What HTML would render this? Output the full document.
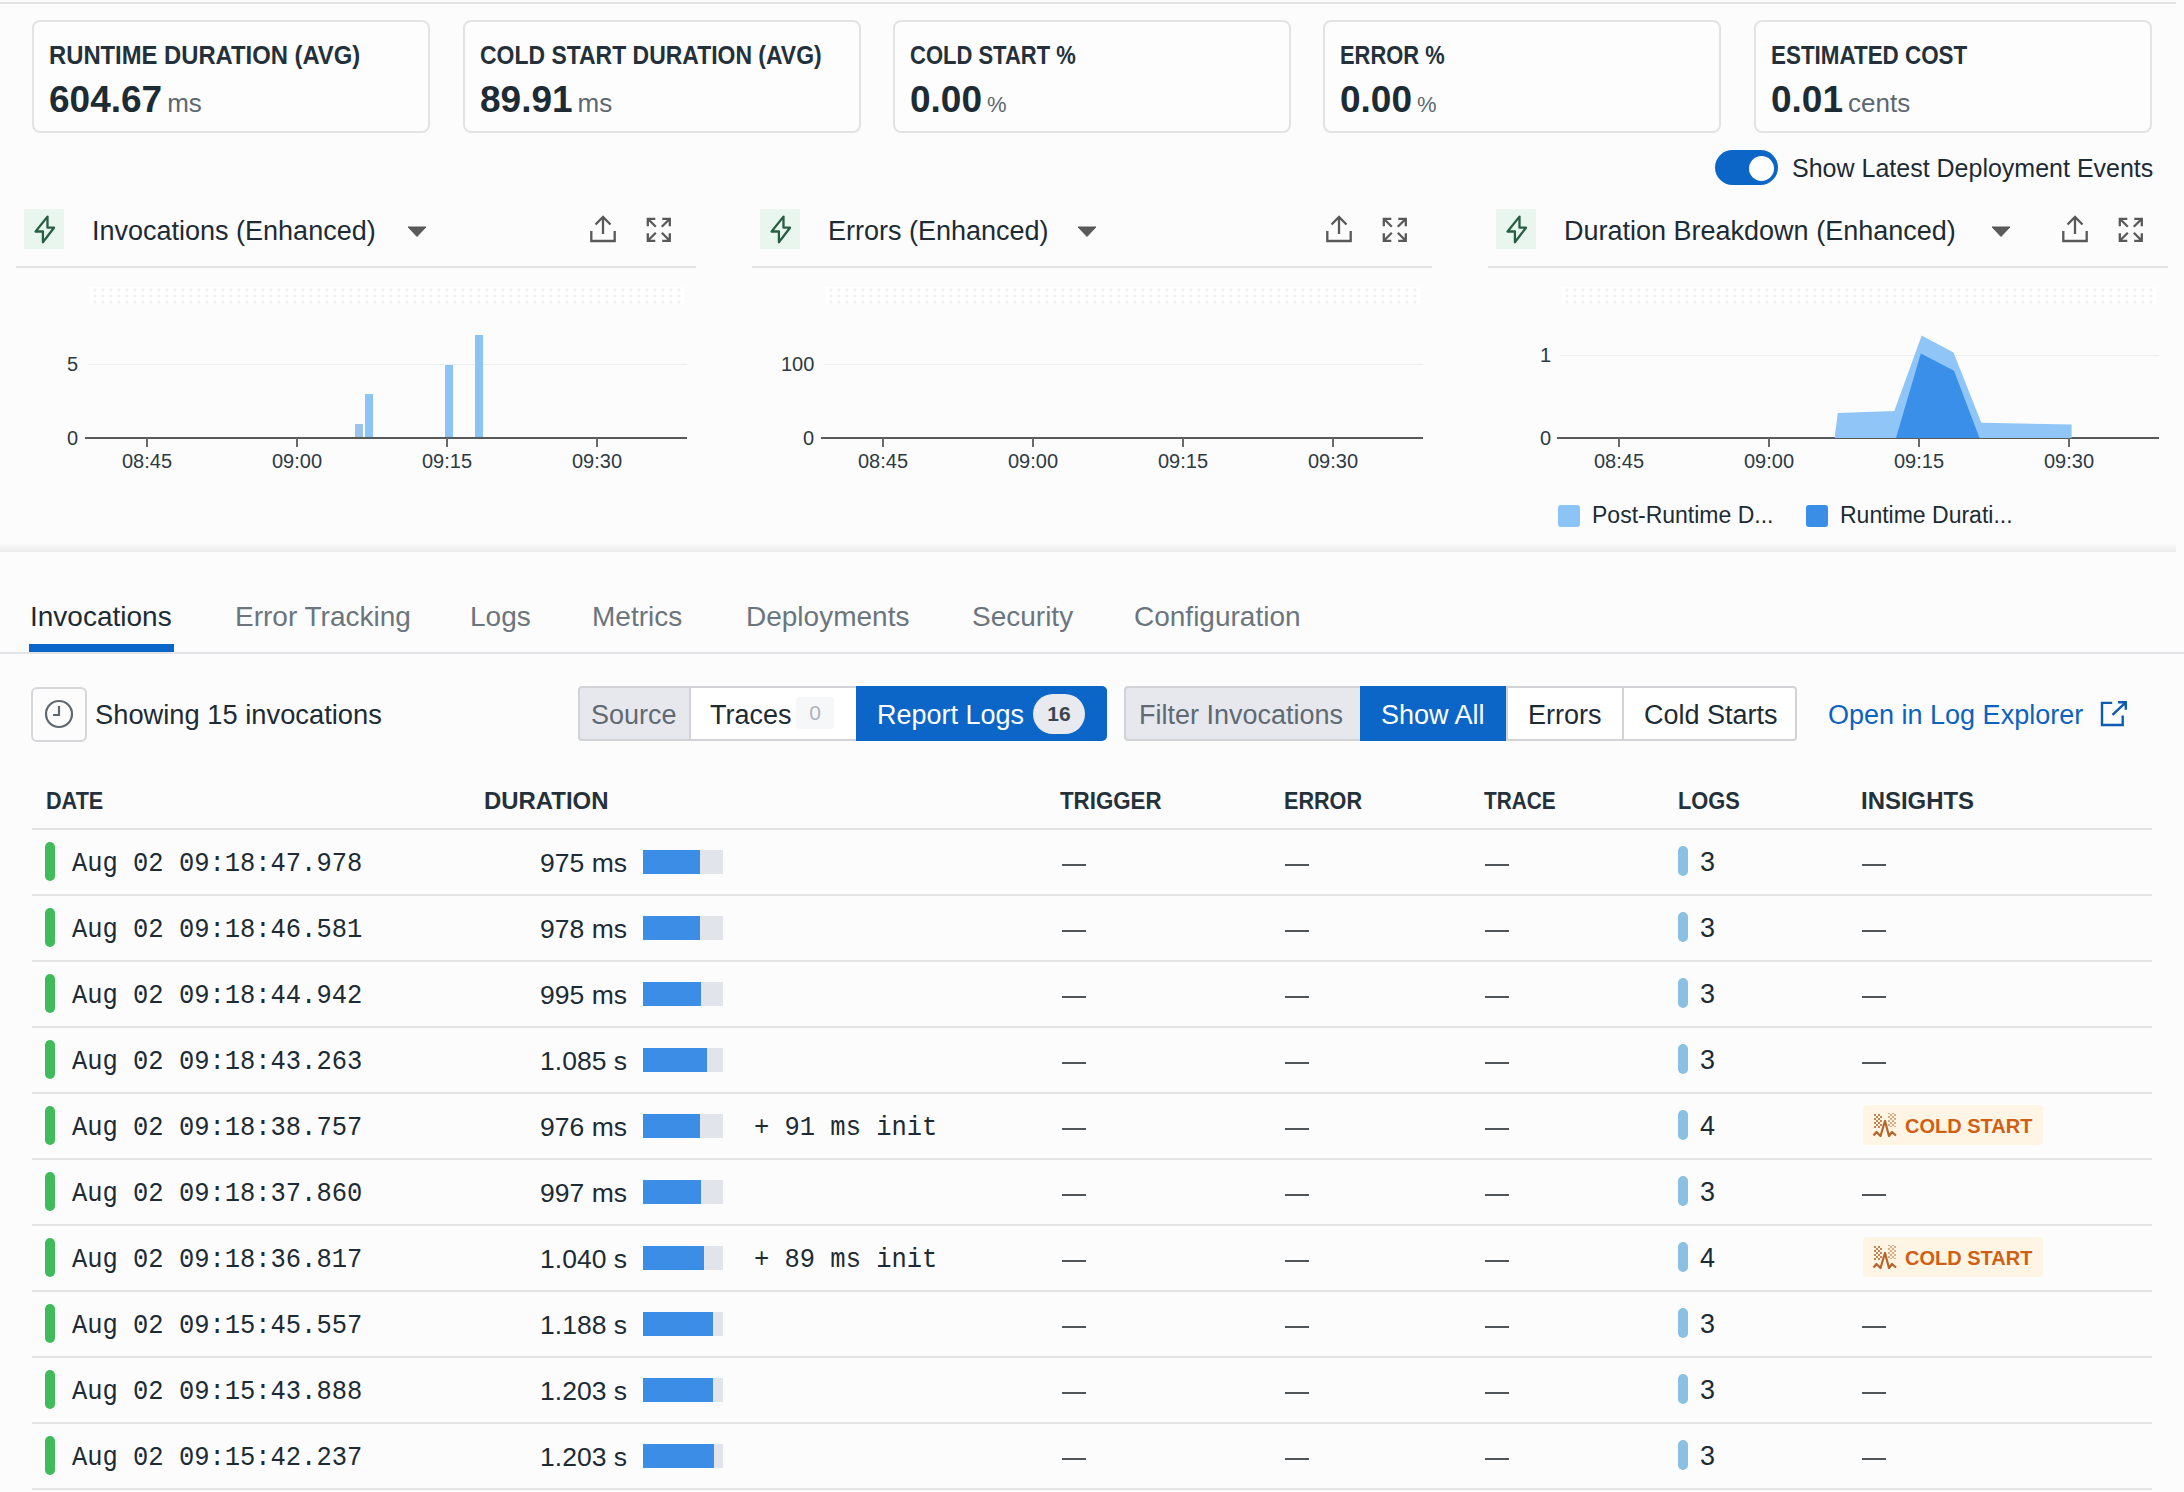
<!DOCTYPE html>
<html><head><meta charset="utf-8">
<style>
*{box-sizing:border-box;margin:0;padding:0}
html,body{width:2184px;height:1492px;overflow:hidden;background:#fcfcfc}
body{position:relative;font-family:"Liberation Sans",sans-serif;color:#1c2b34}
.a{position:absolute;white-space:nowrap;line-height:1}
.topline{position:absolute;left:0;top:2px;width:2176px;height:2px;background:#e3e3e3}
.card{position:absolute;top:20px;height:113px;width:398px;border:2px solid #e3e3e3;border-radius:8px;background:#fdfdfd}
.card .lbl{position:absolute;left:15px;top:21px;font-size:25px;color:#24313a;transform-origin:0 0;font-weight:bold;line-height:1;white-space:nowrap}
.card .val{position:absolute;left:15px;top:59px;font-size:37px;font-weight:bold;line-height:1;white-space:nowrap}
.card .val span{font-size:26px;font-weight:normal;color:#5c6770;margin-left:5px}
.hdrline{position:absolute;top:266px;height:2px;background:#e5e5e5}
.bolt{position:absolute;top:209px;width:40px;height:40px;background:#e8f6ee;border-radius:1px}
.bolt svg{display:block}
.ctitle{position:absolute;top:218px;font-size:27px;line-height:1;white-space:nowrap;color:#1c2b34}
.dots{position:absolute;top:287px;height:17px;background-color:#fff;background-image:radial-gradient(circle,#f1f1f1 1.3px,transparent 1.8px);background-size:8px 6px;background-position:2px 0}
.grid{position:absolute;height:1px;background:#eceef0}
.axis{position:absolute;height:2px;background:#595959}
.tick{position:absolute;width:2px;height:9px;background:#6a6a6a}
.ylbl{position:absolute;margin-top:-1px;font-size:20px;line-height:1;color:#2d3a42;white-space:nowrap}
.xlbl{position:absolute;font-size:20px;line-height:1;color:#2d3a42;white-space:nowrap;width:80px;text-align:center}
.tab{position:absolute;top:603px;font-size:28px;line-height:1;color:#6b757d;white-space:nowrap}
.seg{position:absolute;top:686px;height:55px;background:#fff;font-size:27px;line-height:55px;white-space:nowrap;border-top:2px solid #d2d3d6;border-bottom:2px solid #d2d3d6}
.th{position:absolute;top:789px;font-size:24px;color:#24313a;transform-origin:0 0;font-weight:bold;line-height:1;white-space:nowrap}
.row{position:absolute;left:32px;width:2120px;height:67px;border-bottom:2px solid #e5e5e5}
.st{position:absolute;left:13px;top:13px;width:10px;height:39px;border-radius:5px;background:#3fbb5c}
.date{position:absolute;left:40px;top:21px;font-family:"Liberation Mono",monospace;font-size:28px;transform:scaleX(0.909);transform-origin:0 0;line-height:1;white-space:nowrap}
.dur{position:absolute;left:0;width:595px;text-align:right;top:21px;font-size:26.5px;line-height:1;white-space:nowrap}
.dbar{position:absolute;left:611px;top:21px;width:80px;height:24px;background:#e1e4eb}
.dbar i{position:absolute;left:0;top:0;height:24px;background:#3b8de6}
.init{position:absolute;left:722px;top:21px;font-family:"Liberation Mono",monospace;font-size:28px;transform:scaleX(0.909);transform-origin:0 0;line-height:1;white-space:nowrap}
.dash{position:absolute;top:35px;width:24px;height:2px;background:#4f5559}
.lbar{position:absolute;left:1646px;top:17px;width:10px;height:30px;border-radius:5px;background:#8ac0e2}
.lnum{position:absolute;left:1668px;top:20px;font-size:27px;line-height:1}
.cold{position:absolute;left:1831px;top:12px;width:180px;height:40px;background:#fff5e4;border-radius:4px}
.cold svg{position:absolute;left:9px;top:7px}
.cold b{position:absolute;left:42px;top:11px;font-size:20px;line-height:1;color:#cf5f14;white-space:nowrap}
</style></head><body>
<div class="topline"></div>
<div class="card" style="left:32px"><div class="lbl" style="transform:scaleX(0.952)">RUNTIME DURATION (AVG)</div><div class="val">604.67<span>ms</span></div></div>
<div class="card" style="left:463px"><div class="lbl" style="transform:scaleX(0.918)">COLD START DURATION (AVG)</div><div class="val">89.91<span>ms</span></div></div>
<div class="card" style="left:893px"><div class="lbl" style="transform:scaleX(0.88)">COLD START %</div><div class="val">0.00<span style="font-size:22px">%</span></div></div>
<div class="card" style="left:1323px"><div class="lbl" style="transform:scaleX(0.876)">ERROR %</div><div class="val">0.00<span style="font-size:22px">%</span></div></div>
<div class="card" style="left:1754px"><div class="lbl" style="transform:scaleX(0.896)">ESTIMATED COST</div><div class="val">0.01<span>cents</span></div></div>
<div class="a" style="left:1715px;top:150px;width:63px;height:35px;border-radius:18px;background:#0b66c8"></div>
<div class="a" style="left:1748.5px;top:155.5px;width:25px;height:25px;border-radius:50%;background:#fff"></div>
<div class="a" style="left:1792px;top:156px;font-size:25px">Show Latest Deployment Events</div>
<div class="hdrline" style="left:16px;width:680px"></div>
<div class="bolt" style="left:24px"><svg width="40" height="40" viewBox="0 0 40 40"><path d="M23.5 7.6 L11.6 22.5 H18.9 V33.3 L30 18.7 H23.5 Z" fill="none" stroke="#285f43" stroke-width="2.3" stroke-linejoin="round"/></svg></div>
<div class="ctitle" style="left:92px">Invocations (Enhanced)</div>
<div class="a" style="left:407px;top:225px"><svg width="20" height="12" viewBox="0 0 20 12"><path d="M1 1 H19 L10 10.5 Z" fill="#595959" stroke="#595959" stroke-width="1" stroke-linejoin="round"/></svg></div>
<div class="a" style="left:587px;top:213px"><svg width="32" height="32" viewBox="0 0 32 32"><path d="M16 4.5 V21 M8.5 11.5 L16 4 L23.5 11.5" fill="none" stroke="#595959" stroke-width="2.3"/><path d="M4.3 18 V28 H27.7 V18" fill="none" stroke="#595959" stroke-width="2.3"/></svg></div>
<div class="a" style="left:644px;top:215px"><svg width="30" height="30" viewBox="0 0 30 30"><g fill="none" stroke="#595959" stroke-width="2.3" stroke-linecap="butt" stroke-linejoin="miter"><path d="M11.3 3.8 H3.8 V11.3 M3.8 3.8 L11.8 11.8"/><path d="M18.3 3.8 H25.8 V11.3 M25.8 3.8 L17.8 11.8"/><path d="M11.3 25.8 H3.8 V18.3 M3.8 25.8 L11.8 17.8"/><path d="M18.3 25.8 H25.8 V18.3 M25.8 25.8 L17.8 17.8"/></g></svg></div>
<div class="dots" style="left:89px;width:595px"></div>
<div class="axis" style="left:85px;top:437px;width:602px"></div>
<div class="tick" style="left:146px;top:438px"></div>
<div class="xlbl" style="left:107px;top:451px">08:45</div>
<div class="tick" style="left:296px;top:438px"></div>
<div class="xlbl" style="left:257px;top:451px">09:00</div>
<div class="tick" style="left:446px;top:438px"></div>
<div class="xlbl" style="left:407px;top:451px">09:15</div>
<div class="tick" style="left:596px;top:438px"></div>
<div class="xlbl" style="left:557px;top:451px">09:30</div>
<div class="hdrline" style="left:752px;width:680px"></div>
<div class="bolt" style="left:760px"><svg width="40" height="40" viewBox="0 0 40 40"><path d="M23.5 7.6 L11.6 22.5 H18.9 V33.3 L30 18.7 H23.5 Z" fill="none" stroke="#285f43" stroke-width="2.3" stroke-linejoin="round"/></svg></div>
<div class="ctitle" style="left:828px">Errors (Enhanced)</div>
<div class="a" style="left:1077px;top:225px"><svg width="20" height="12" viewBox="0 0 20 12"><path d="M1 1 H19 L10 10.5 Z" fill="#595959" stroke="#595959" stroke-width="1" stroke-linejoin="round"/></svg></div>
<div class="a" style="left:1323px;top:213px"><svg width="32" height="32" viewBox="0 0 32 32"><path d="M16 4.5 V21 M8.5 11.5 L16 4 L23.5 11.5" fill="none" stroke="#595959" stroke-width="2.3"/><path d="M4.3 18 V28 H27.7 V18" fill="none" stroke="#595959" stroke-width="2.3"/></svg></div>
<div class="a" style="left:1380px;top:215px"><svg width="30" height="30" viewBox="0 0 30 30"><g fill="none" stroke="#595959" stroke-width="2.3" stroke-linecap="butt" stroke-linejoin="miter"><path d="M11.3 3.8 H3.8 V11.3 M3.8 3.8 L11.8 11.8"/><path d="M18.3 3.8 H25.8 V11.3 M25.8 3.8 L17.8 11.8"/><path d="M11.3 25.8 H3.8 V18.3 M3.8 25.8 L11.8 17.8"/><path d="M18.3 25.8 H25.8 V18.3 M25.8 25.8 L17.8 17.8"/></g></svg></div>
<div class="dots" style="left:825px;width:595px"></div>
<div class="axis" style="left:821px;top:437px;width:602px"></div>
<div class="tick" style="left:882px;top:438px"></div>
<div class="xlbl" style="left:843px;top:451px">08:45</div>
<div class="tick" style="left:1032px;top:438px"></div>
<div class="xlbl" style="left:993px;top:451px">09:00</div>
<div class="tick" style="left:1182px;top:438px"></div>
<div class="xlbl" style="left:1143px;top:451px">09:15</div>
<div class="tick" style="left:1332px;top:438px"></div>
<div class="xlbl" style="left:1293px;top:451px">09:30</div>
<div class="hdrline" style="left:1488px;width:680px"></div>
<div class="bolt" style="left:1496px"><svg width="40" height="40" viewBox="0 0 40 40"><path d="M23.5 7.6 L11.6 22.5 H18.9 V33.3 L30 18.7 H23.5 Z" fill="none" stroke="#285f43" stroke-width="2.3" stroke-linejoin="round"/></svg></div>
<div class="ctitle" style="left:1564px">Duration Breakdown (Enhanced)</div>
<div class="a" style="left:1991px;top:225px"><svg width="20" height="12" viewBox="0 0 20 12"><path d="M1 1 H19 L10 10.5 Z" fill="#595959" stroke="#595959" stroke-width="1" stroke-linejoin="round"/></svg></div>
<div class="a" style="left:2059px;top:213px"><svg width="32" height="32" viewBox="0 0 32 32"><path d="M16 4.5 V21 M8.5 11.5 L16 4 L23.5 11.5" fill="none" stroke="#595959" stroke-width="2.3"/><path d="M4.3 18 V28 H27.7 V18" fill="none" stroke="#595959" stroke-width="2.3"/></svg></div>
<div class="a" style="left:2116px;top:215px"><svg width="30" height="30" viewBox="0 0 30 30"><g fill="none" stroke="#595959" stroke-width="2.3" stroke-linecap="butt" stroke-linejoin="miter"><path d="M11.3 3.8 H3.8 V11.3 M3.8 3.8 L11.8 11.8"/><path d="M18.3 3.8 H25.8 V11.3 M25.8 3.8 L17.8 11.8"/><path d="M11.3 25.8 H3.8 V18.3 M3.8 25.8 L11.8 17.8"/><path d="M18.3 25.8 H25.8 V18.3 M25.8 25.8 L17.8 17.8"/></g></svg></div>
<div class="dots" style="left:1561px;width:595px"></div>
<div class="axis" style="left:1557px;top:437px;width:602px"></div>
<div class="tick" style="left:1618px;top:438px"></div>
<div class="xlbl" style="left:1579px;top:451px">08:45</div>
<div class="tick" style="left:1768px;top:438px"></div>
<div class="xlbl" style="left:1729px;top:451px">09:00</div>
<div class="tick" style="left:1918px;top:438px"></div>
<div class="xlbl" style="left:1879px;top:451px">09:15</div>
<div class="tick" style="left:2068px;top:438px"></div>
<div class="xlbl" style="left:2029px;top:451px">09:30</div>
<div class="grid" style="left:88px;top:364px;width:599px"></div>
<div class="ylbl" style="left:67px;top:355px">5</div>
<div class="ylbl" style="left:67px;top:429px">0</div>
<div class="grid" style="left:824px;top:364px;width:599px"></div>
<div class="ylbl" style="left:781px;top:355px">100</div>
<div class="ylbl" style="left:803px;top:429px">0</div>
<div class="grid" style="left:1560px;top:355px;width:599px"></div>
<div class="ylbl" style="left:1540px;top:346px">1</div>
<div class="ylbl" style="left:1540px;top:429px">0</div>
<div class="a" style="left:355px;top:424px;width:8px;height:13px;background:#9cc3ea"></div>
<div class="a" style="left:365px;top:394px;width:8px;height:43px;background:#8cc4f6"></div>
<div class="a" style="left:445px;top:365px;width:8px;height:72px;background:#8cc4f6"></div>
<div class="a" style="left:475px;top:335px;width:8px;height:102px;background:#8cc4f6"></div>
<svg class="a" style="left:0;top:0" width="2184" height="540"><polygon points="1834.6,438 1837.8,413 1894.3,410.9 1921.7,335.5 1953.5,352.5 1981.3,422.8 2071.6,424.4 2071.6,438" fill="#8fc5f7"/><polygon points="1896,438 1920.8,353.4 1954,370.7 1979.5,438" fill="#3a90e8"/></svg>
<div class="a" style="left:1558px;top:505px;width:22px;height:22px;border-radius:3px;background:#8cc4f6"></div>
<div class="a" style="left:1592px;top:504px;font-size:23px">Post-Runtime D...</div>
<div class="a" style="left:1806px;top:505px;width:22px;height:22px;border-radius:3px;background:#3a8ee6"></div>
<div class="a" style="left:1840px;top:504px;font-size:23px">Runtime Durati...</div>
<div class="a" style="left:0;top:544px;width:2176px;height:8px;background:linear-gradient(#f9f9f9,#ededed)"></div>
<div class="tab" style="left:30px;color:#1c2b34">Invocations</div>
<div class="tab" style="left:235px;color:#6b757d">Error Tracking</div>
<div class="tab" style="left:470px;color:#6b757d">Logs</div>
<div class="tab" style="left:592px;color:#6b757d">Metrics</div>
<div class="tab" style="left:746px;color:#6b757d">Deployments</div>
<div class="tab" style="left:972px;color:#6b757d">Security</div>
<div class="tab" style="left:1134px;color:#6b757d">Configuration</div>
<div class="a" style="left:0;top:652px;width:2184px;height:2px;background:#e3e5e8"></div>
<div class="a" style="left:29px;top:644px;width:145px;height:8px;background:#0b66c8"></div>
<div class="a" style="left:31px;top:687px;width:56px;height:55px;border:2px solid #d6d7da;border-radius:6px"></div>
<svg class="a" style="left:42px;top:697px" width="34" height="34" viewBox="0 0 34 34"><circle cx="17" cy="17" r="13" fill="none" stroke="#5f676e" stroke-width="2.2"/><path d="M17 9 V18 H11" fill="none" stroke="#5f676e" stroke-width="2.2"/></svg>
<div class="a" style="left:95px;top:701px;font-size:27.3px">Showing 15 invocations</div>
<div class="seg" style="left:578px;width:111px;background:#e6e8ee;color:#5f6a73;border-left:2px solid #d2d3d6;border-radius:4px 0 0 4px;padding-left:11px">Source</div>
<div class="seg" style="left:689px;width:167px;border-left:2px solid #d2d3d6;padding-left:19px">Traces<span style="position:absolute;left:105px;top:9px;width:38px;height:32px;line-height:32px;border-radius:4px;background:#f6f7f8;color:#aeb3b9;font-size:21px;text-align:center">0</span></div>
<div class="seg" style="left:856px;width:251px;background:#0b66c8;border-color:#0b66c8;color:#fff;border-radius:0 5px 5px 0;padding-left:21px">Report Logs<span style="position:absolute;left:177px;top:6px;width:52px;height:40px;line-height:40px;border-radius:20px;background:#e8eaef;color:#3c4650;font-size:21px;font-weight:bold;text-align:center">16</span></div>
<div class="seg" style="left:1124px;width:237px;background:#e6e8ee;color:#5f6a73;border-left:2px solid #d2d3d6;border-radius:4px 0 0 4px;padding-left:13px">Filter Invocations</div>
<div class="seg" style="left:1360px;width:147px;background:#0b66c8;border-color:#0b66c8;color:#fff;padding-left:21px">Show All</div>
<div class="seg" style="left:1506px;width:117px;border-left:2px solid #d2d3d6;padding-left:20px">Errors</div>
<div class="seg" style="left:1622px;width:175px;border-left:2px solid #d2d3d6;border-right:2px solid #d2d3d6;border-radius:0 4px 4px 0;padding-left:20px">Cold Starts</div>
<div class="a" style="left:1828px;top:702px;font-size:27px;color:#0c62bf">Open in Log Explorer</div>
<svg class="a" style="left:2099px;top:698px" width="32" height="32" viewBox="0 0 32 32"><path d="M13.2 4.9 H3 V27 H23.7 V17.5" fill="none" stroke="#0d5cb0" stroke-width="2.4"/><path d="M19 4.3 H26.8 V11.8 M26.8 4.3 L13.5 16.8" fill="none" stroke="#0d5cb0" stroke-width="2.4"/></svg>
<div class="th" style="left:46px;transform:scaleX(0.901)">DATE</div>
<div class="th" style="left:484px;transform:scaleX(0.997)">DURATION</div>
<div class="th" style="left:1060px;transform:scaleX(0.929)">TRIGGER</div>
<div class="th" style="left:1284px;transform:scaleX(0.9)">ERROR</div>
<div class="th" style="left:1484px;transform:scaleX(0.866)">TRACE</div>
<div class="th" style="left:1678px;transform:scaleX(0.909)">LOGS</div>
<div class="th" style="left:1861px;transform:scaleX(0.997)">INSIGHTS</div>
<div class="a" style="left:32px;top:828px;width:2120px;height:2px;background:#e2e2e2"></div>
<div class="row" style="top:829px"><div class="st"></div><div class="date">Aug 02 09:18:47.978</div><div class="dur">975 ms</div><div class="dbar"><i style="width:57px"></i></div><div class="dash" style="left:1030px"></div><div class="dash" style="left:1253px"></div><div class="dash" style="left:1453px"></div><div class="lbar"></div><div class="lnum">3</div><div class="dash" style="left:1830px"></div></div>
<div class="row" style="top:895px"><div class="st"></div><div class="date">Aug 02 09:18:46.581</div><div class="dur">978 ms</div><div class="dbar"><i style="width:57px"></i></div><div class="dash" style="left:1030px"></div><div class="dash" style="left:1253px"></div><div class="dash" style="left:1453px"></div><div class="lbar"></div><div class="lnum">3</div><div class="dash" style="left:1830px"></div></div>
<div class="row" style="top:961px"><div class="st"></div><div class="date">Aug 02 09:18:44.942</div><div class="dur">995 ms</div><div class="dbar"><i style="width:58px"></i></div><div class="dash" style="left:1030px"></div><div class="dash" style="left:1253px"></div><div class="dash" style="left:1453px"></div><div class="lbar"></div><div class="lnum">3</div><div class="dash" style="left:1830px"></div></div>
<div class="row" style="top:1027px"><div class="st"></div><div class="date">Aug 02 09:18:43.263</div><div class="dur">1.085 s</div><div class="dbar"><i style="width:64px"></i></div><div class="dash" style="left:1030px"></div><div class="dash" style="left:1253px"></div><div class="dash" style="left:1453px"></div><div class="lbar"></div><div class="lnum">3</div><div class="dash" style="left:1830px"></div></div>
<div class="row" style="top:1093px"><div class="st"></div><div class="date">Aug 02 09:18:38.757</div><div class="dur">976 ms</div><div class="dbar"><i style="width:57px"></i></div><div class="init">+ 91 ms init</div><div class="dash" style="left:1030px"></div><div class="dash" style="left:1253px"></div><div class="dash" style="left:1453px"></div><div class="lbar"></div><div class="lnum">4</div><div class="cold"><svg width="26" height="26" viewBox="0 0 26 26"><defs><pattern id="ck" width="4" height="4" patternUnits="userSpaceOnUse"><rect width="2" height="2" fill="#b8703a"/><rect x="2" y="2" width="2" height="2" fill="#b8703a"/></pattern></defs><rect x="2" y="2" width="8" height="14" fill="url(#ck)" opacity="0.85"/><rect x="16" y="1" width="8" height="14" fill="url(#ck)" opacity="0.55"/><path d="M1.5 23.5 L4.5 20 L8.5 24 L13 9 L17 24 L20 20 L24 23.5" fill="none" stroke="#b5652a" stroke-width="2.2" stroke-linejoin="round"/></svg><b>COLD START</b></div></div>
<div class="row" style="top:1159px"><div class="st"></div><div class="date">Aug 02 09:18:37.860</div><div class="dur">997 ms</div><div class="dbar"><i style="width:58px"></i></div><div class="dash" style="left:1030px"></div><div class="dash" style="left:1253px"></div><div class="dash" style="left:1453px"></div><div class="lbar"></div><div class="lnum">3</div><div class="dash" style="left:1830px"></div></div>
<div class="row" style="top:1225px"><div class="st"></div><div class="date">Aug 02 09:18:36.817</div><div class="dur">1.040 s</div><div class="dbar"><i style="width:61px"></i></div><div class="init">+ 89 ms init</div><div class="dash" style="left:1030px"></div><div class="dash" style="left:1253px"></div><div class="dash" style="left:1453px"></div><div class="lbar"></div><div class="lnum">4</div><div class="cold"><svg width="26" height="26" viewBox="0 0 26 26"><defs><pattern id="ck" width="4" height="4" patternUnits="userSpaceOnUse"><rect width="2" height="2" fill="#b8703a"/><rect x="2" y="2" width="2" height="2" fill="#b8703a"/></pattern></defs><rect x="2" y="2" width="8" height="14" fill="url(#ck)" opacity="0.85"/><rect x="16" y="1" width="8" height="14" fill="url(#ck)" opacity="0.55"/><path d="M1.5 23.5 L4.5 20 L8.5 24 L13 9 L17 24 L20 20 L24 23.5" fill="none" stroke="#b5652a" stroke-width="2.2" stroke-linejoin="round"/></svg><b>COLD START</b></div></div>
<div class="row" style="top:1291px"><div class="st"></div><div class="date">Aug 02 09:15:45.557</div><div class="dur">1.188 s</div><div class="dbar"><i style="width:70px"></i></div><div class="dash" style="left:1030px"></div><div class="dash" style="left:1253px"></div><div class="dash" style="left:1453px"></div><div class="lbar"></div><div class="lnum">3</div><div class="dash" style="left:1830px"></div></div>
<div class="row" style="top:1357px"><div class="st"></div><div class="date">Aug 02 09:15:43.888</div><div class="dur">1.203 s</div><div class="dbar"><i style="width:70px"></i></div><div class="dash" style="left:1030px"></div><div class="dash" style="left:1253px"></div><div class="dash" style="left:1453px"></div><div class="lbar"></div><div class="lnum">3</div><div class="dash" style="left:1830px"></div></div>
<div class="row" style="top:1423px"><div class="st"></div><div class="date">Aug 02 09:15:42.237</div><div class="dur">1.203 s</div><div class="dbar"><i style="width:71px"></i></div><div class="dash" style="left:1030px"></div><div class="dash" style="left:1253px"></div><div class="dash" style="left:1453px"></div><div class="lbar"></div><div class="lnum">3</div><div class="dash" style="left:1830px"></div></div>
</body></html>
